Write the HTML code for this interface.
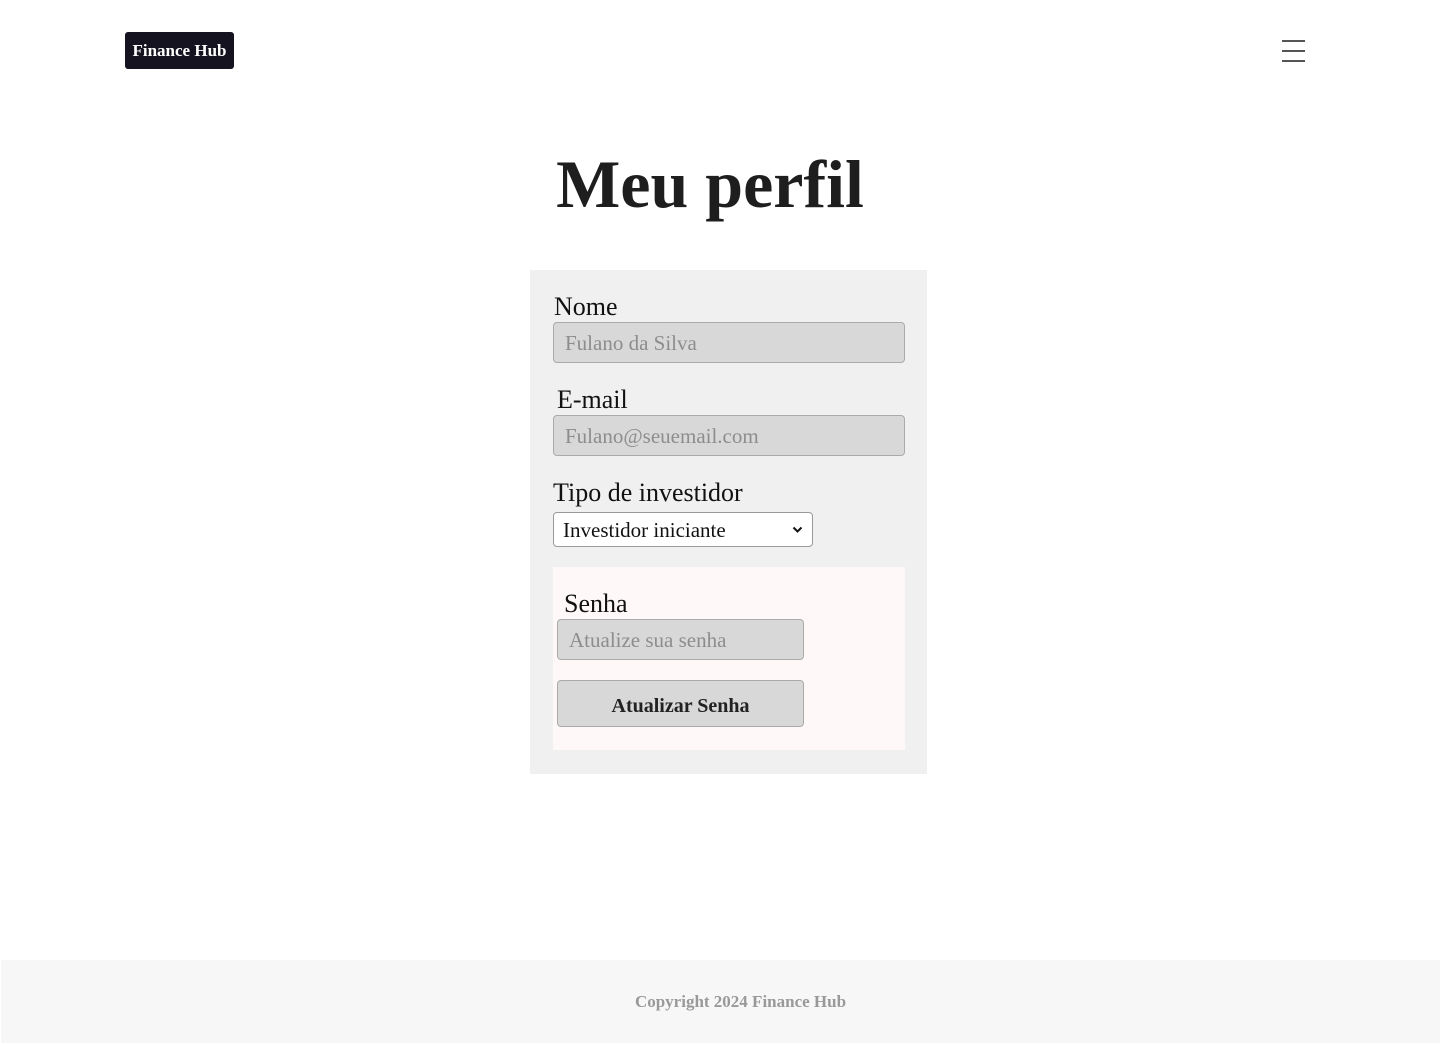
<!DOCTYPE html>
<html><head><meta charset="utf-8"><style>
*{box-sizing:border-box;margin:0;padding:0}
body{width:1440px;height:1043px;position:relative;background:#fff;font-family:"Liberation Serif","DejaVu Serif",serif;color:#111;overflow:hidden}
.a{position:absolute}
.logo{left:125px;top:32px;width:109px;height:37px;background:#14131f;color:#fff;border-radius:3px;font-weight:bold;font-size:17px;line-height:38px;text-align:center}
.burger{left:1282px;top:40px;width:23px}
.burger span{display:block;height:2px;background:#555;margin-bottom:8px}
h1{position:absolute;left:-10px;width:1440px;top:145px;text-align:center;font-size:68px;font-weight:bold;color:#1e1e1e}
.card{left:530px;top:270px;width:397px;height:504px;background:#f0f0f0}
.lbl{font-size:26px;color:#111}
.inp{background:#d8d8d8;border:1px solid #aaa;border-radius:4px;height:41px;color:#8d8d8d;font-size:21px;line-height:41px;padding-left:11px}
.sel{left:553px;top:512px;width:260px;height:35px;background:#fff;border:1px solid #999;border-radius:4px;font-size:21px;line-height:35px;padding-left:9px}
.pw{left:553px;top:567px;width:352px;height:183px;background:#fff8f8}
.btn{left:557px;top:680px;width:247px;height:47px;background:#d8d8d8;border:1px solid #aaa;border-radius:4px;text-align:center;font-weight:bold;font-size:20px;line-height:51px;color:#222}
.foot{left:21px;top:960px;width:1439px;height:83px;text-align:center;color:#999;font-weight:bold;font-size:17px;line-height:84px}
.footbg{left:1px;top:960px;width:1439px;height:83px;background:#f7f7f7}
</style></head><body>
<div class="a logo">Finance Hub</div>
<div class="a burger"><span></span><span></span><span></span></div>
<h1>Meu perfil</h1>
<div class="a card"></div>
<div class="a lbl" style="left:554px;top:292px">Nome</div>
<div class="a inp" style="left:553px;top:322px;width:352px">Fulano da Silva</div>
<div class="a lbl" style="left:557px;top:385px">E-mail</div>
<div class="a inp" style="left:553px;top:415px;width:352px">Fulano@seuemail.com</div>
<div class="a lbl" style="left:553px;top:478px">Tipo de investidor</div>
<div class="a sel">Investidor iniciante<svg style="position:absolute;right:9px;top:13px" width="11" height="8" viewBox="0 0 11 8"><path d="M1.5 1.5L5.5 5.5L9.5 1.5" stroke="#111" stroke-width="2" fill="none"/></svg></div>
<div class="a pw"></div>
<div class="a lbl" style="left:564px;top:589px">Senha</div>
<div class="a inp" style="left:557px;top:619px;width:247px">Atualize sua senha</div>
<div class="a btn">Atualizar Senha</div>
<div class="a footbg"></div>
<div class="a foot">Copyright 2024 Finance Hub</div>
</body></html>
